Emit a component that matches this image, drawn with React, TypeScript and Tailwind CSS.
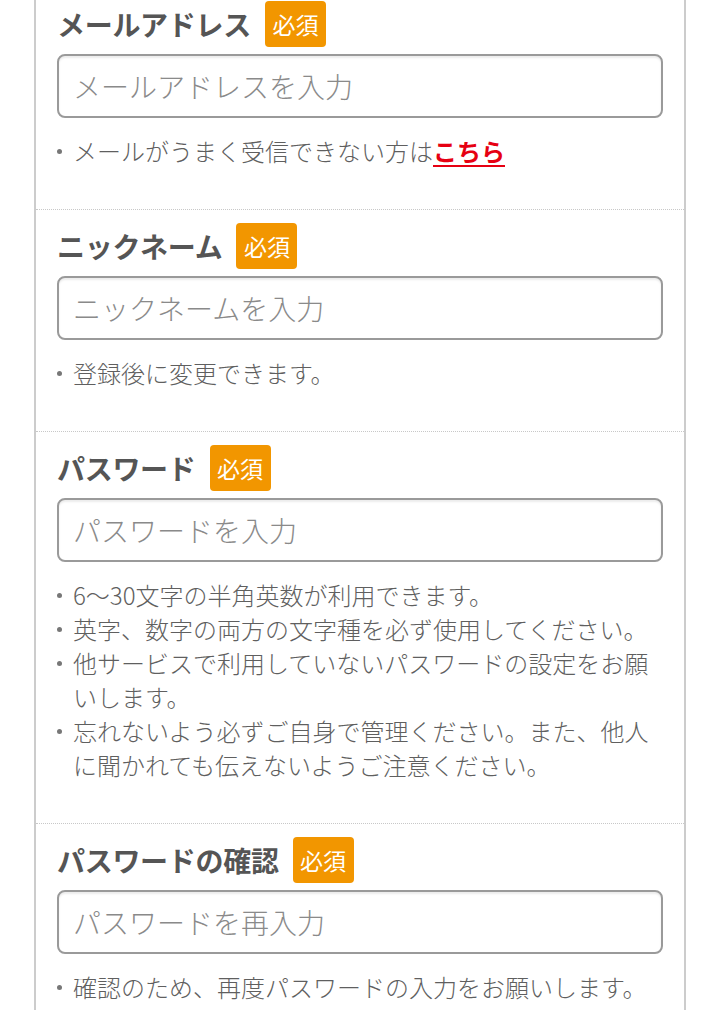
const font = {
  fontFamily: '"Noto Sans CJK JP", "Noto Sans", sans-serif',
}

interface Field {
  label: string
  placeholder: string
  type: string
  notes: React.ReactNode[]
}

const fields: Field[] = [
  {
    label: 'メールアドレス',
    placeholder: 'メールアドレスを入力',
    type: 'email',
    notes: [
      <>
        メールがうまく受信できない方は
        <a href="#" className="font-bold text-[#e60012] underline underline-offset-4">
          こちら
        </a>
      </>,
    ],
  },
  {
    label: 'ニックネーム',
    placeholder: 'ニックネームを入力',
    type: 'text',
    notes: ['登録後に変更できます。'],
  },
  {
    label: 'パスワード',
    placeholder: 'パスワードを入力',
    type: 'password',
    notes: [
      '6〜30文字の半角英数が利用できます。',
      '英字、数字の両方の文字種を必ず使用してください。',
      '他サービスで利用していないパスワードの設定をお願いします。',
      '忘れないよう必ずご自身で管理ください。また、他人に聞かれても伝えないようご注意ください。',
    ],
  },
  {
    label: 'パスワードの確認',
    placeholder: 'パスワードを再入力',
    type: 'password',
    notes: ['確認のため、再度パスワードの入力をお願いします。'],
  },
]

function FormField({ field, first }: { field: Field; first: boolean }) {
  return (
    <div
      className={
        first
          ? 'px-[21px] pt-[1px] pb-[41px]'
          : 'border-t border-dotted border-[#c8c8c8] px-[21px] pt-[13px] pb-[41px]'
      }
    >
      <div className="flex items-center h-[46px]">
        <span className="text-[28px] font-bold text-[#555] leading-none tracking-[-0.3px]">
          {field.label}
        </span>
        <span className="ml-[14px] flex h-[46px] w-[61px] items-center justify-center rounded-[4px] bg-[#f29600] text-[23px] font-normal text-white leading-none">
          必須
        </span>
      </div>
      <input
        type={field.type}
        placeholder={field.placeholder}
        className="mt-[7px] block h-[64px] w-full rounded-[8px] border-2 border-[#9a9a9a] bg-white px-[14px] text-[28px] font-light text-[#333] placeholder:text-[#8a8a8a] shadow-[inset_0_2px_2px_rgba(0,0,0,0.08)] outline-none"
        style={font}
      />
      <ul className="mt-[16px]">
        {field.notes.map((note, i) => (
          <li key={i} className="relative pl-[16px] text-[24px] font-light leading-[34px] text-[#5f5f5f]">
            <span className="absolute left-0 top-[15px] h-[5px] w-[5px] rounded-full bg-[#777]" />
            {note}
          </li>
        ))}
      </ul>
    </div>
  )
}

export default function App() {
  return (
    <div className="min-h-screen bg-white" style={font}>
      <div className="mx-[34px] border-x-2 border-[#cccccc] bg-white">
        {fields.map((f, i) => (
          <FormField key={f.label} field={f} first={i === 0} />
        ))}
      </div>
    </div>
  )
}
